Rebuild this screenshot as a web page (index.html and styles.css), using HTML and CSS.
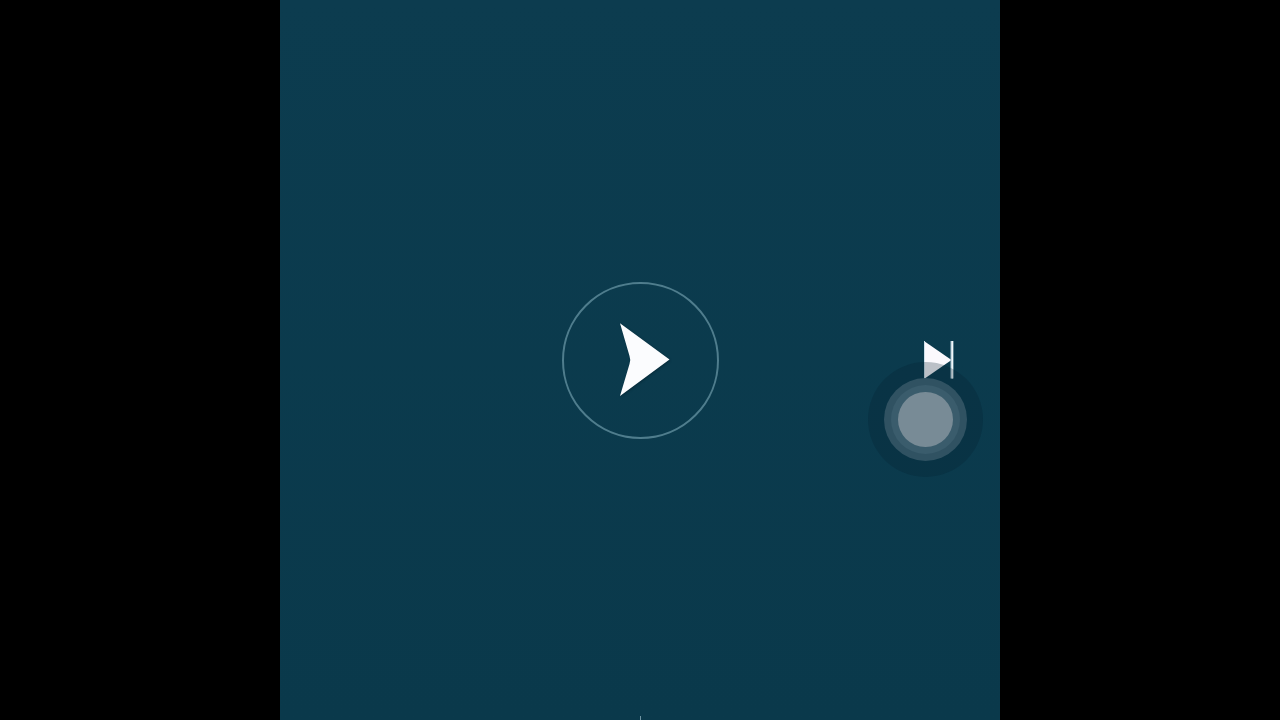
FILE: index.html
```html
<!DOCTYPE html>
<html lang="en">
<head>
    <meta charset="UTF-8">
    <meta name="viewport" content="width=device-width, initial-scale=1.0">
    <title>Video player</title>
    <link rel="stylesheet" href="styles.css">
</head>
<body>
    <div class="stage">
        <button class="play-button" aria-label="Play">
            <svg class="play-icon" width="152" height="152" viewBox="0 0 152 152">
                <path d="M56 39.3L105.5 75.5L56 112L65.5 80Q67 76 65.5 72Z" fill="#fbfcfe"/>
            </svg>
        </button>

        <button class="skip-button" aria-label="Next">
            <svg width="30" height="38" viewBox="0 0 30 38">
                <polygon points="0,0 27.5,19 0,38" fill="#fbf9fd"/>
                <rect x="0" y="0" width="1" height="37" fill="#cfe0ea"/>
                <rect x="26.5" y="0" width="3" height="37.5" fill="#a9c3d0"/>
                <rect x="27.5" y="0" width="1.5" height="37.5" fill="#f2f7f9"/>
            </svg>
        </button>

        <div class="touch-dot">
            <div class="touch-ring">
                <div class="touch-ring-inner">
                    <div class="touch-core"></div>
                </div>
            </div>
        </div>

        <div class="tick"></div>
    </div>
</body>
</html>
```

FILE: styles.css
```css
:root {
    --frame-top: #0c3c4f;
    --frame-bottom: #0a394b;
    --ring-color: #4f7d8d;
}

* {
    box-sizing: border-box;
    margin: 0;
    padding: 0;
}

body {
    background-color: #000;
    height: 100vh;
    overflow: hidden;
    display: flex;
    justify-content: center;
}

.stage {
    position: relative;
    width: 720px;
    height: 720px;
    background: linear-gradient(var(--frame-top), var(--frame-bottom));
    display: flex;
    align-items: center;
    justify-content: center;
}

.play-button {
    width: 157px;
    height: 157px;
    display: flex;
    align-items: center;
    justify-content: center;
    background: none;
    border: 2px solid var(--ring-color);
    border-radius: 50%;
}

.play-icon {
    flex-shrink: 0;
    filter: drop-shadow(1px 1px 1px rgba(0, 20, 30, 0.35));
}

.skip-button {
    position: absolute;
    left: 644px;
    top: 341px;
    display: flex;
    background: none;
    border: none;
}

.touch-dot {
    position: absolute;
    left: 588px;
    top: 362px;
    width: 115px;
    height: 115px;
    display: flex;
    align-items: center;
    justify-content: center;
    background-color: rgba(5, 30, 45, 0.26);
    border-radius: 50%;
}

.touch-ring {
    width: 83px;
    height: 83px;
    display: flex;
    align-items: center;
    justify-content: center;
    background-color: #305262;
    border-radius: 50%;
}

.touch-ring-inner {
    width: 69px;
    height: 69px;
    display: flex;
    align-items: center;
    justify-content: center;
    background-color: #3a5c6c;
    border-radius: 50%;
}

.touch-core {
    width: 55px;
    height: 55px;
    background-color: #788b96;
    border-radius: 50%;
}

.tick {
    position: absolute;
    left: 360px;
    bottom: 0;
    width: 1px;
    height: 4px;
    background-color: #6f95a3;
}
```
